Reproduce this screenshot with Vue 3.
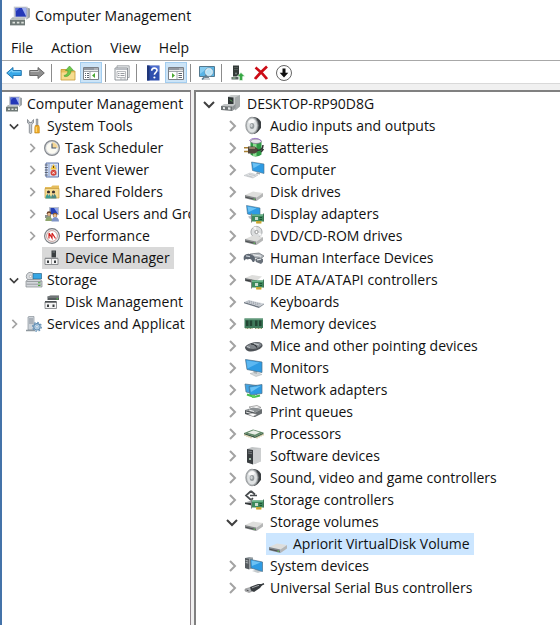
<template>
  <div class="window">
    <header class="titlebar">
      <svg class="icon20" viewBox="0 0 16 16" v-html="icons.console"></svg>
      <h1>Computer Management</h1>
    </header>

    <nav class="menubar">
      <button v-for="m in menus" :key="m">{{ m }}</button>
    </nav>

    <div class="toolbar" role="toolbar">
      <template v-for="(t, i) in tools" :key="i">
        <span v-if="t === '|'" class="sep"></span>
        <button v-else :class="['tool', { 'tool--on': t.on }]" :aria-label="t.label">
          <svg class="icon16" viewBox="0 0 16 16" v-html="icons[t.icon]"></svg>
        </button>
      </template>
    </div>

    <main class="panes">
      <ul class="tree tree--console" role="tree">
        <li v-for="n in consoleTree" :key="n.text" :class="['row', 'row--l' + n.level]" role="treeitem">
          <button v-if="n.level" class="twist" :aria-label="n.text">
            <svg v-if="n.state" viewBox="0 0 12 12" :class="n.state"><path :d="chevrons[n.state]" /></svg>
          </button>
          <span :class="['node', { 'node--sel': n.selected }]">
            <svg class="icon16" viewBox="0 0 16 16" v-html="icons[n.icon]"></svg>
            <span>{{ n.text }}</span>
          </span>
        </li>
      </ul>

      <ul class="tree tree--devices" role="tree">
        <li v-for="n in deviceTree" :key="n.text" :class="['row', 'row--l' + n.level]" role="treeitem">
          <button class="twist" :aria-label="n.text">
            <svg v-if="n.state" viewBox="0 0 12 12" :class="n.state"><path :d="chevrons[n.state]" /></svg>
          </button>
          <span :class="['node', { 'node--sel': n.selected }]">
            <svg class="icon20" viewBox="0 0 20 20" v-html="icons[n.icon]"></svg>
            <span>{{ n.text }}</span>
          </span>
        </li>
      </ul>
    </main>
  </div>
</template>

<script setup>
const menus = ["File", "Action", "View", "Help"];

const tools = [
  { icon: "back",       label: "Back" },
  { icon: "forward",    label: "Forward" },
  "|",
  { icon: "up",         label: "Up one level" },
  { icon: "paneLeft",   label: "Show/Hide console tree", on: true },
  "|",
  { icon: "props",      label: "Properties" },
  "|",
  { icon: "help",       label: "Help" },
  { icon: "paneRight",  label: "Show/Hide action pane", on: true },
  "|",
  { icon: "scan",       label: "Scan for hardware changes" },
  "|",
  { icon: "update",     label: "Update driver" },
  { icon: "remove",     label: "Uninstall device" },
  { icon: "disable",    label: "Disable device" },
];

const chevrons = {
  open:   "M1 4l5 5 5-5",
  closed: "M4 1l5 5-5 5",
};

const node = (level, state, icon, text, selected = false) => ({ level, state, icon, text, selected });

const consoleTree = [
  node(0, "",       "console",   "Computer Management"),
  node(1, "open",   "tools",     "System Tools"),
  node(2, "closed", "clock",     "Task Scheduler"),
  node(2, "closed", "event",     "Event Viewer"),
  node(2, "closed", "shared",    "Shared Folders"),
  node(2, "closed", "users",     "Local Users and Gro"),
  node(2, "closed", "perf",      "Performance"),
  node(2, "",       "devmgr",    "Device Manager", true),
  node(1, "open",   "storage",   "Storage"),
  node(2, "",       "diskmgr",   "Disk Management"),
  node(1, "closed", "services",  "Services and Applicat"),
];

const deviceTree = [
  node(0, "open",   "desktop",   "DESKTOP-RP90D8G"),
  node(1, "closed", "speaker",   "Audio inputs and outputs"),
  node(1, "closed", "battery",   "Batteries"),
  node(1, "closed", "computer",  "Computer"),
  node(1, "closed", "drive",     "Disk drives"),
  node(1, "closed", "display",   "Display adapters"),
  node(1, "closed", "dvd",       "DVD/CD-ROM drives"),
  node(1, "closed", "hid",       "Human Interface Devices"),
  node(1, "closed", "ide",       "IDE ATA/ATAPI controllers"),
  node(1, "closed", "keyboard",  "Keyboards"),
  node(1, "closed", "memory",    "Memory devices"),
  node(1, "closed", "mouse",     "Mice and other pointing devices"),
  node(1, "closed", "monitor",   "Monitors"),
  node(1, "closed", "network",   "Network adapters"),
  node(1, "closed", "printer",   "Print queues"),
  node(1, "closed", "cpu",       "Processors"),
  node(1, "closed", "software",  "Software devices"),
  node(1, "closed", "speaker",   "Sound, video and game controllers"),
  node(1, "closed", "storctl",   "Storage controllers"),
  node(1, "open",   "drive",     "Storage volumes"),
  node(2, "",       "drive",     "Apriorit VirtualDisk Volume", true),
  node(1, "closed", "system",    "System devices"),
  node(1, "closed", "usb",       "Universal Serial Bus controllers"),
];

// pieces shared by several device icons
const card = `
  <path d="M8 10.500h11.500v7H8z" fill="#3d8a5c"/><path d="M8 10.500h11.500v1.500H8z" fill="#6bb38a"/>
  <path d="M12 17h5.500v2.500H12z" fill="#d8b53c"/><path d="M14 17v2.500M16 17v2.500" stroke="#8a7020" stroke-width=".5"/>
  <path d="M7.500 9.500v9" stroke="#7b8580"/><path d="M19.500 9.500v8" stroke="#2c5f42" stroke-width=".8"/>
  <path d="M11 13h3v3h-3z" fill="#c9dccf"/><path d="M15.500 13.500h2.500M15.500 15.500h2.500" stroke="#1f5236"/>`;
const speaker = `
  <path d="M9 1c5 0 8 3 8 7 0 5-3 9-7 10z" fill="#55595c"/>
  <path d="M13 2l4 4v6l-4 4z" fill="#3c4043"/>
  <ellipse cx="8" cy="9.500" rx="6.200" ry="8.300" fill="#b4b8ba" stroke="#85898c" stroke-width=".8"/>
  <ellipse cx="8" cy="9.500" rx="4.900" ry="6.900" fill="#dfe2e3"/>
  <path d="M4 6c2-3 5-4 7-1l-3 4z" fill="#fafafa"/>
  <ellipse cx="8" cy="10" rx="2.300" ry="3" fill="#949a9d"/><ellipse cx="7.500" cy="9.500" rx="1.200" ry="1.700" fill="#d0d4d6"/>`;
const drive = `
  <path d="M1 13l8-3.500 10 1.500-6.500 4.500z" fill="#dededc"/>
  <path d="M1 13l11.500 2.500v3.500L1 16.200z" fill="#85888a"/>
  <path d="M12.500 15.500L19 11v3.500L12.500 19z" fill="#b5b6b6"/>
  <path d="M1.500 15.200l10 2.300" stroke="#4b4e50"/><path d="M9.500 17.200h1.500" stroke="#63cf58"/>`;
const pc = `
  <path d="M0 11h12v4.500H0z" fill="#6f7977"/><path d="M0 11l2-2h10v2z" fill="#b0b7b4"/>
  <path d="M2 12.500h2v1.500H2zM5.500 12.500h2v1.500h-2zM9 12.500h2v1.500H9z" fill="#dfe3de"/>
  <path d="M13 1l3 1v7l-3 2z" fill="#9da3a8"/>
  <path d="M3 .5h11v9.500H3z" fill="#c4c8ce"/><path d="M4.500 1.500h8.500v7H4.500z" fill="#2438b8"/>
  <path d="M9.500 1.500h3.500v7z" fill="#9fb0f0"/><path d="M4.500 1.500h3l-3 3z" fill="#5a70de"/>`;

const icons = {
  console: pc,
  back: `<path d="M.7 8l6.300-5.500v3h8.300v5H7v3z" fill="#37a8e8" stroke="#1c6ea8" stroke-width=".9"/><path d="M2.500 8L6 5v1.800h8.500" fill="none" stroke="#8fd7fb"/>`,
  forward: `<path d="M15.300 8L9 2.500v3H.7v5H9v3z" fill="#909090" stroke="#606060" stroke-width=".9"/><path d="M1.500 6.500h8.300V5" fill="none" stroke="#bdbdbd"/>`,
  up: `<path d="M1 4h5l1.500 2H15v9H1z" fill="#e8bf5c"/><path d="M1 7.500h14V15H1z" fill="#f6dc8f"/><path d="M1 4.500h5l1 1.500h8v9H1z" fill="none" stroke="#c79a36" stroke-width=".8"/>
    <path d="M4 10.500c3-.5 4-2.500 4-5H5.500L9.500 1l4 4.500H11c0 4-3 6.500-6.500 6z" fill="#6cc74a" stroke="#4a9a30" stroke-width=".6"/>`,
  paneLeft: `<path d="M.5 2.500h15v12H.5z" fill="#fff" stroke="#7a7f86"/><path d="M1 3h14v2.200H1z" fill="#9298a0"/><path d="M11.500 4h1M13.500 4h1" stroke="#fff"/>
    <path d="M1 6.500h14M7 6.500v8" stroke="#8a9098" stroke-width=".8"/><path d="M2 8.500h1M2 10.500h1M2 12.500h1M4 8.500h2M4 10.500h2M4 12.500h2" stroke="#5f6670"/><path d="M12 8v5l-3-2.500z" fill="#4aa832"/>`,
  props: `<path d="M3 .8h12.200v11.700H3z" fill="#e8eaec" stroke="#9b9fa4" stroke-width=".9"/><path d="M1 3h12.500v12H1z" fill="#fbfbfb" stroke="#858a90" stroke-width=".9"/>
    <path d="M1.500 4.200h11.500" stroke="#b0b5bb" stroke-width="1.400"/><path d="M3 6.500h8.500v6H3z" fill="none" stroke="#9b9fa4" stroke-width=".7"/><path d="M4 8.500h1.500M6.500 8.500h4M4 10.500h1.500M6.500 10.500h4" stroke="#7c8188" stroke-width=".8"/><path d="M6 14h2.500M9.500 14h2.500" stroke="#a4a9ae"/>`,
  help: `<path d="M2 .5h12.500v15H2z" fill="#2f4fae"/><path d="M2 .5h2.500v15H2z" fill="#1f3679"/><path d="M4.500 1h9.500v6z" fill="#4f6fd0"/>
    <path d="M6.700 5.800c0-3.600 5.300-3.300 5.300-.5 0 2-2.600 2-2.600 4.400" fill="none" stroke="#fff" stroke-width="1.600"/><circle cx="9.400" cy="12.500" r="1.100" fill="#fff"/>`,
  paneRight: `<path d="M.5 2.500h15v12H.5z" fill="#fff" stroke="#7a7f86"/><path d="M1 3h14v2.200H1z" fill="#9298a0"/><path d="M11.500 4h1M13.500 4h1" stroke="#fff"/>
    <path d="M1 6.500h14M9 6.500v8" stroke="#8a9098" stroke-width=".8"/><path d="M10.500 8.500h3.500M10.500 10.500h3.500M10.500 12.500h3.500" stroke="#5f6670"/><path d="M4 8v5l3-2.500z" fill="#4aa832"/>`,
  scan: `<path d="M.5 1.500h15v10H.5z" fill="#58b4e6" stroke="#54798f"/><path d="M1 2h9L1 9z" fill="#86cdf2"/><path d="M6 11.500h4V13H6z" fill="#7b8790"/><path d="M3 14h8" stroke="#94a0a8"/>
    <circle cx="10" cy="7" r="3.600" fill="#b8e3f7" stroke="#e9f5fb" stroke-width="1.200"/><circle cx="10" cy="7" r="4.200" fill="none" stroke="#5c89a5" stroke-width=".6"/><path d="M7.300 10L3 14.500" stroke="#5c7f95" stroke-width="1.600"/>`,
  update: `<path d="M3 .5h6v11H3z" fill="#333a38"/><path d="M4 2.500h4M4 4.500h4" stroke="#5d6462" stroke-width=".8"/><circle cx="6" cy="8.500" r="1" fill="#7f8684"/><path d="M1.500 12h7v2.500h-7z" fill="#566060"/><path d="M2.500 13h3" stroke="#a9d0a0"/>
    <path d="M11 7.500l4 4h-2.300V15.500H9.300v-4H7z" fill="#39a845" stroke="#fff" stroke-width=".6"/>`,
  remove: `<path d="M2.500 2.500c4 3 8 7 11.500 11.500M14 1.500C10 5 6 9 2 14" fill="none" stroke="#cc0c16" stroke-width="2.800"/>`,
  disable: `<circle cx="8" cy="8" r="7.500" fill="#fff" stroke="#555" stroke-width=".9"/><path d="M6.500 3.500h3v4.300h2.800L8 12.500 3.700 7.800h2.800z" fill="#111"/>`,

  tools: `<path d="M1.500 1.500v3.300l1.800 1.700v8c0 1.300 2.400 1.300 2.400 0v-8l1.800-1.700V1.500L6 3.500v1H3v-1z" fill="#c8ccd0" stroke="#7b8086" stroke-width=".8"/>
    <path d="M10.200 1h1.700v6.500h-1.700z" fill="#a2a8ae" stroke="#777d83" stroke-width=".5"/><path d="M9.300 7.500h3.500l.5 2v5.500H8.800V9.500z" fill="#f0ad28" stroke="#bd7f14" stroke-width=".6"/><path d="M10.300 9v5" stroke="#ffe08a"/>`,
  clock: `<circle cx="8" cy="8" r="7.400" fill="#d7d9dc" stroke="#85898e" stroke-width="1.200"/><circle cx="8" cy="8" r="5.700" fill="#fbfaf2"/><path d="M8 2.300A5.700 5.700 0 0 1 13.700 8H8z" fill="#f5d795"/><path d="M8 3.500V8h4.200" fill="none" stroke="#45556e" stroke-width="1.100"/>`,
  event: `<path d="M2 1h12.500v14H2z" fill="#d8e3f5" stroke="#4e67a0" stroke-width=".9"/><path d="M5 1v14" stroke="#8aa0ce"/><path d="M.8 3h3M.8 5.500h3M.8 8h3M.8 10.500h3M.8 13h3" stroke="#5c6371"/>
    <path d="M7 4h6M7 6h6M7 12h6" stroke="#8195bf" stroke-width=".8"/><path d="M9.500 2l3.200 5.500H6.300z" fill="#f4c63b"/><path d="M9.500 4v2" stroke="#6c4a00"/><circle cx="9.500" cy="10.800" r="3" fill="#d6443a"/><path d="M8.400 9.700l2.200 2.200M10.600 9.700l-2.200 2.200" stroke="#fff" stroke-width=".9"/>`,
  shared: `<path d="M1 3h6l1.500-1.500H15V13H1z" fill="#e5bd5c"/><path d="M1 4.500h14V14H1z" fill="#f7dd92" stroke="#c59b3c" stroke-width=".7"/>
    <circle cx="4.500" cy="8" r="1.600" fill="#3b3230"/><circle cx="9.500" cy="8" r="1.600" fill="#3b3230"/><path d="M1.500 14.500c0-6 5.500-6 5.500 0z" fill="#3c9d94"/><path d="M7 14.500c0-6 5.500-6 5.500 0z" fill="#4f8a83"/><path d="M4.500 9.500v2M9.500 9.500v2" stroke="#ecc9a0"/>`,
  users: `<path d="M5 1h10v8H5z" fill="#b9bfcb"/><path d="M6.500 2H14v6H6.500z" fill="#2440b4"/><path d="M10 2h4v6z" fill="#8fa4ea"/><path d="M1 9h6v3H1z" fill="#8a918f"/>
    <circle cx="5" cy="7.500" r="2.300" fill="#6a4028"/><circle cx="5" cy="8.300" r="1.600" fill="#e6b88e"/><circle cx="11" cy="9" r="2.300" fill="#94602c"/><circle cx="11" cy="9.600" r="1.600" fill="#eac39a"/><path d="M1.300 15c0-6 7-6 7 0z" fill="#8ea46c"/><path d="M7.500 15.500c0-6 7.500-6 7.500 0z" fill="#7d93c7"/>`,
  perf: `<circle cx="8" cy="8" r="7.400" fill="#eee" stroke="#777b80" stroke-width="1.100"/><circle cx="8" cy="8" r="5.400" fill="#fff" stroke="#b98a87" stroke-width=".8"/><path d="M5 10.500V5.500M5 5l3 5V5.500M8 5l3.500 5.500" fill="none" stroke="#d2201d" stroke-width="1.200"/>`,
  devmgr: `<path d="M7.500 .5h4.500v7H7.500z" fill="#3b3f41"/><path d="M8.500 2h2.500" stroke="#7c8386"/><path d="M1 8.500h13v6H1z" fill="#f4f4f4" stroke="#76797c" stroke-width=".8"/><path d="M1 8.200h13" stroke="#8b8f92"/><path d="M3 10.500h2V13H3zM10 10.500h2V13h-2z" fill="#3c4042"/><path d="M7.500 9v5" stroke="#aaa"/>`,
  storage: `<circle cx="4.500" cy="4.500" r="4.200" fill="#d7dadd" stroke="#898e93" stroke-width=".8"/><circle cx="4.500" cy="4.500" r="1.200" fill="#fff" stroke="#888" stroke-width=".5"/><path d="M7 1.500h8.500V7H7z" fill="#36a6e4" stroke="#2b6689" stroke-width=".7"/>
    <path d="M0 9l2-1.500h12L16 9v6H0z" fill="#d3d6da" stroke="#85898d" stroke-width=".7"/><path d="M.5 9.500h15M.5 12.200h15" stroke="#8b9094" stroke-width=".8"/><path d="M12 10.800h2.500M12 13.500h2.500" stroke="#4ea83e" stroke-width="1.100"/>`,
  diskmgr: `<path d="M3.500 2.500l3-1H15v4.500H3.500z" fill="#565b5d"/><path d="M3.500 3H15" stroke="#8d9294"/><path d="M12.500 4.800h1.500" stroke="#55d045"/><path d="M1 8h11.500v6.500H1z" fill="#f4f4f4" stroke="#76797c" stroke-width=".8"/><path d="M1 7.800h11.500" stroke="#44484a" stroke-width="1.500"/><path d="M3 10.500h2V13H3zM8.500 10.500h2V13h-2z" fill="#3c4042"/>`,
  services: `<path d="M2 1l1-.5h5V14H2z" fill="#cdd3d9" stroke="#8b939b" stroke-width=".7"/><path d="M3 3h4M3 5h4M3 7h4" stroke="#77818b" stroke-width=".8"/><path d="M0 14.500h9" stroke="#8f989f" stroke-width="1.500"/>
    <circle cx="11" cy="10.800" r="3.200" fill="#b9d4ea" stroke="#5f8bb0" stroke-width="1.200"/><circle cx="11" cy="10.800" r="4.400" fill="none" stroke="#6a95b8" stroke-width="1.200" stroke-dasharray="1.700 1.700"/><circle cx="11" cy="10.800" r="1.200" fill="#fff" stroke="#5f8bb0" stroke-width=".5"/>`,

  desktop: `<path d="M7 2.500L10 1h9v11l-4 4-8-1z" fill="#c9cccc"/><path d="M14 3.500L19 1v11.500l-5 4z" fill="#a7abac"/><path d="M7 3l5.500.5V10H7z" fill="#2f3536"/><path d="M9 5.500l2 2" stroke="#61b859"/>
    <path d="M0 12l3-2h9.500l-1 2z" fill="#c0c3c4"/><path d="M0 12l11.500.5V17L0 16z" fill="#6d7274"/><path d="M11.500 12.500l3-2.500v4l-3 3z" fill="#8f9496"/><path d="M2 13l2 .2v2l-2-.2zM7 13.300l2.500.2v2.200L7 15.500z" fill="#e7eaea"/>`,
  speaker,
  battery: `<path d="M6.500 3.500h11v13c-3 2.500-8 2.500-11 0z" fill="#2f9a45"/><path d="M9 4h3.500v14.200H9z" fill="#8bdc90"/><ellipse cx="12" cy="3.300" rx="5.500" ry="2.200" fill="#e3e4e8" stroke="#84708f" stroke-width=".7"/>
    <path d="M5.500 3C7-.5 15-.5 17 3" fill="none" stroke="#9b79c4"/><path d="M4 8.500h6.500l3 2V14l-3 1.500H4z" fill="#50463b"/><path d="M5 10h6" stroke="#b09c7e" stroke-width="1.300"/><path d="M0 9.800h4M0 13.500h4" stroke="#a97f35" stroke-width="1.600"/><path d="M13 12c4 1 6-2 6-5M17 14l2.500-3" fill="none" stroke="#333" stroke-width="1.500"/>`,
  computer: `<path d="M7.500 2l12.500 2v9.500L8.500 10.500z" fill="#2e9be3" stroke="#49708c" stroke-width=".6"/><path d="M8.500 3l8 1.200-7 4z" fill="#6cc2f4"/><path d="M13 12l3 .8v1.700l-4-.7z" fill="#a6abae"/><path d="M0 15.500L6 13l8 2-5 3z" fill="#e3e5e7" stroke="#b3b7ba" stroke-width=".5"/><path d="M2.500 15.500l6 1.500M5 14.300l6.500 1.500" stroke="#a6abaf" stroke-width=".5"/>`,
  drive,
  display: `<path d="M2.500 1.500L16 4v9L3.500 10z" fill="#2e9be3" stroke="#49708c" stroke-width=".6"/><path d="M3.500 2.500l9 1.800-8 4z" fill="#6cc2f4"/><path d="M4 12.500l4-1 2 3-4 .5z" fill="#b9bdc0"/>${card}`,
  dvd: `<circle cx="12.500" cy="6" r="5.600" fill="#dcdedf" stroke="#8d9092" stroke-width=".7"/><path d="M12.500 6L9 1.500l3-1zM12.500 6l4 4 1.500-2z" fill="#f8f8f8"/><circle cx="12.500" cy="6" r="1.600" fill="#fff" stroke="#777" stroke-width=".7"/>${drive}`,
  hid: `<path d="M6 6l9-1 5 3-3 2.500-8-1z" fill="#b4babf" stroke="#5a6067" stroke-width=".6"/><path d="M9 6.800l8 1.400" stroke="#fff" stroke-width=".8"/><path d="M0 8c2-2.500 5-3 7-1.500 2 1 4 1.500 4 4.500 0 2.500-1 3-2 3s-1-3-3-3-2 1-4 0c-.7 0-.8 1.500-1.500 1.500S-.7 10 0 8z" fill="#5d6671"/><path d="M2 7.800l4 .9" stroke="#c4cbd3" stroke-width="1.200"/>
    <path d="M11 11.500l4-2 4 1.500v3l-2 2-5-2z" fill="#69717a"/><path d="M13 11.800l4-.6" stroke="#dde1e4" stroke-width="1.200"/>`,
  ide: `<path d="M1 8l7-3 10 1.500-5 4z" fill="#dededc"/><path d="M1 8l12 2.500v3.500L1 11z" fill="#6c7072"/><path d="M1.500 10l7 1.500" stroke="#35383a"/>${card}`,
  keyboard: `<path d="M0 10L5 8l15 3.500-5 3z" fill="#d3d7dc"/><path d="M0 10l15 4.500V16L0 11.300z" fill="#6d7681"/><path d="M15 14.500l5-3v1L15 16z" fill="#8f969e"/><path d="M2.500 9.800l13 3.500M4.500 9l12 3" stroke="#8b939d" stroke-width=".8" stroke-dasharray="1.500 .7"/>`,
  memory: `<path d="M.5 4.500h18.500V14H.5z" fill="#3f7a5b"/><path d="M.5 4.500h18.500v1.200H.5z" fill="#6fa487"/><path d="M2 6.500h2.500v5.500H2zM5.700 6.500h2.500v5.500H5.700zM11 6.500h2.500v5.500H11zM15 6.500h2.500v5.500H15z" fill="#234634"/><path d="M1.500 14.500H9M11 14.500h7.500" stroke="#8c9a6c" stroke-dasharray="1 .5"/>`,
  mouse: `<path d="M1 11c2-3 9-5 12-5 3.500 0 5.500 1.500 5.500 3.500 0 3-7 6-11.500 6-4 0-6-2-6-4.500z" fill="#4d5257"/><path d="M2 10.800c2-2.500 8-4.300 11-4.300 2.500 0 4.500 1 4.500 2.500-1 2-5.500 4-8.500 4s-6-.5-7-2.200z" fill="#80868b"/><path d="M7 8c3 0 5 1.500 6 3.500" fill="none" stroke="#2c3135" stroke-width="1.200"/><path d="M10 7.500l5 1.500" stroke="#c3c8cb" stroke-width="1.100"/><path d="M3 10.500l3 1" stroke="#c3c8cb"/>`,
  monitor: `<path d="M6 15.500l6-1.500 6 2.500-6 2z" fill="#d5d9db" stroke="#a9aeb1" stroke-width=".5"/><path d="M9 12l4 1v3l-3-.7z" fill="#aeb4b7"/><path d="M1.500 1.500L18 4v10.500L3 11.500z" fill="#2e9be3" stroke="#4d7088" stroke-width=".7"/><path d="M2.500 2.500l13 2-12 6z" fill="#5cb8f2"/>`,
  network: `<path d="M1 4l12 1.500v9L2 12z" fill="#41a4e4" stroke="#4d7088" stroke-width=".7"/><path d="M5 6.500L18 4.500V13.500L6 15z" fill="#2e9be3" stroke="#4d7088" stroke-width=".7"/><path d="M6 7.500l11-1.700L7 12z" fill="#6cc2f4"/><path d="M3 14.500l7 2.500 6-1.500" fill="none" stroke="#45bd4e" stroke-width="2"/><path d="M8 15h3v3H8z" fill="#5ccf60"/>`,
  printer: `<path d="M5 5l8-1.500 4 2-8 2z" fill="#f3f3f3" stroke="#777" stroke-width=".6"/><path d="M1 8l8-2.500L18 7l-7 3.500z" fill="#8b9093"/><path d="M1 8l10 2.500V15L1 12z" fill="#505558"/><path d="M11 10.500L18 7v4.500L11 15z" fill="#686d70"/><path d="M2 10l7 2M5 8l5 1.500" stroke="#e9ebec"/><path d="M4 12.500l5-1.300 4 1.300-4 2z" fill="#fff" stroke="#888" stroke-width=".5"/>`,
  cpu: `<path d="M0 9l9-3.500 10.500 3-8.500 4z" fill="#5f8867"/><path d="M0 9l11 3.500V14L0 10.300z" fill="#38573f"/><path d="M11 12.500l8.500-4V10L11 14z" fill="#47694d"/><path d="M3.500 8.700L9.500 6.300 16 8.300l-5 2.500z" fill="#e9ede6"/><path d="M1 10.500V12M3 11.300v1.500M5 12v1.500M7 12.800v1.500M13 13v1.500M15 12v1.500M17 11v1.500M19 10v1.500" stroke="#a9924a" stroke-width=".8"/>`,
  software: `<path d="M3 3l5-2 9 1v13l-6 3-8-2z" fill="#c2c5c6"/><path d="M3 3l6 1v14.500l-6-2z" fill="#3a3e41"/><path d="M9 4l8-2v13.500l-8 3z" fill="#cdcfd0"/><path d="M4 5l4 .7M4 7l4 .7" stroke="#85898c" stroke-width=".8"/><circle cx="6" cy="13" r="1.100" fill="#b9d7c0"/>`,
  storctl: `<path d="M7 1L2 5.500 7 10M7 1l4 3.500M7 10l2-1.800M6 5.500h7" fill="none" stroke="#484c4f" stroke-width="1.700"/><path d="M1 12.500h9V16l-9-2z" fill="#34383a"/><path d="M1 12.500l5-1.500h4v1.500z" fill="#a5a9ab"/>${card}`,
  system: `<path d="M1 2l4-1 4 .5V12l-4 1.500L1 12z" fill="#959ca0"/><path d="M1 2l4 .7v10.500L1 12z" fill="#565c60"/><path d="M1.700 4.500l2.600.5M1.700 6.500l2.600.5" stroke="#c5cacd" stroke-width=".8"/><path d="M8 15l5-1.500 5 2-4 1.500z" fill="#c5cacd"/><path d="M6.500 3.500L18.500 6v9.500L7 12z" fill="#2e9be3" stroke="#4d7088" stroke-width=".7"/><path d="M7.500 4.500l9 2L8 10z" fill="#6cc2f4"/>`,
  usb: `<path d="M1 11l5-1.500 3 1.500v2L5 14.500 1 13z" fill="#b2b5b8" stroke="#777" stroke-width=".5"/><path d="M2.500 12l2 .7" stroke="#444"/><path d="M6 9L14 6h5l-3 4-6 4-3-1.500z" fill="#383c3f"/><path d="M8 9.800L15 7.300" stroke="#a0a4a7"/><path d="M17 7l3-1.200" stroke="#383c3f" stroke-width="1.500"/>`,
};
</script>

<style>
body { background: #fff; }
</style>

<style scoped>
.window {
  display: flex; flex-direction: column; box-sizing: border-box; min-height: 100vh;
  border-left: 2px solid #4473a9; background: #fff; color: #111;
  font-family: "Open Sans", "Noto Sans", sans-serif; font-size: 14px; line-height: 22px;
}
button { font: inherit; color: inherit; background: none; border: 0; padding: 0; margin: 0; }
svg { display: block; flex: none; overflow: visible; }
.icon16 { width: 16px; height: 16px; }
.icon20 { width: 20px; height: 20px; }

.titlebar { display: flex; align-items: center; gap: 5px; height: 32px; padding-left: 8px; }
.titlebar h1 { margin: 0; font-size: 14px; font-weight: 400; }

.menubar {
  display: flex; gap: 18px; align-items: flex-start; box-sizing: border-box;
  height: 29px; padding: 5px 0 0 9px; border-bottom: 1px solid #a8a8a8;
}

.toolbar { display: flex; gap: 1px; height: 21px; padding: 1px 0 0 1px; border-bottom: 1px solid #d9d9d9; }
.tool { display: flex; align-items: center; justify-content: center; width: 22px; box-sizing: border-box; }
.tool--on { background: #cce4f7; border: 1px solid #a3cdef; }
.sep { width: 1px; margin: 2px 4px 1px 2px; background: #8c8c8c; }

.panes { display: flex; flex: 1; padding-top: 6px; background: #f0f0f0; }
.tree {
  list-style: none; margin: 0; padding: 1px 0; box-sizing: border-box; overflow: hidden;
  background: #fff; border-top: 2px solid #808080;
}
.tree--console { flex: 0 0 189px; border-right: 1px solid #8f858b; }
.tree--devices { flex: 1; min-width: 0; margin-left: 3px; border-left: 2px solid #808080; }

.row { display: flex; height: 22px; white-space: nowrap; }
.twist { display: flex; align-items: center; justify-content: center; flex: none; width: 20px; }
.twist svg { width: 12px; height: 12px; }
.twist path { fill: none; stroke-width: 2; }
.open path { stroke: #404040; }
.closed path { stroke: #a3a3a3; }
.node { display: flex; align-items: center; gap: 5px; padding: 0 4px 0 2px; }

.tree--console .twist svg { width: 10px; height: 10px; }
.tree--console .row--l0 { padding-left: 2px; }
.tree--console .row--l1 { padding-left: 2px; }
.tree--console .row--l2 { padding-left: 20px; }
.tree--console .node--sel { background: #d9d9d9; }

.tree--devices .row--l0 { padding-left: 3px; }
.tree--devices .row--l1 { padding-left: 26px; }
.tree--devices .row--l2 { padding-left: 50px; }
.tree--devices .node { gap: 6px; }
.tree--devices .node--sel { gap: 5px; background: #cce6ff; }
</style>
